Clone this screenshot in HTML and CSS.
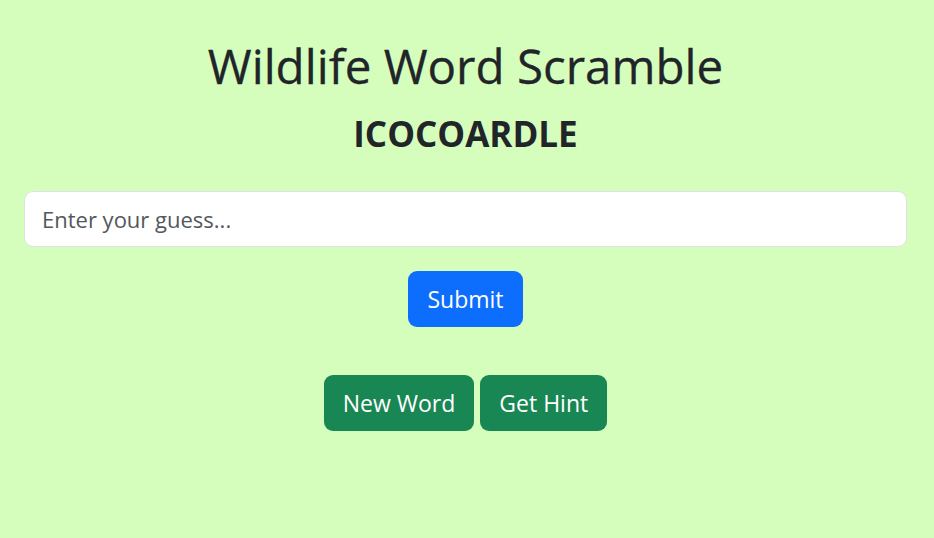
FILE: index.html
```html
<!DOCTYPE html>
<html lang="en">
<head>
<meta charset="utf-8">
<title>Wildlife Word Scramble</title>
<link rel="stylesheet" href="styles.css">
</head>
<body>
<main class="game">
  <h1 class="title">Wildlife Word Scramble</h1>
  <h2 class="scrambled">ICOCOARDLE</h2>
  <input class="guess" type="text" placeholder="Enter your guess...">
  <div class="row-submit">
    <button class="btn btn-primary">Submit</button>
  </div>
  <div class="row-actions">
    <button class="btn btn-success">New Word</button>
    <button class="btn btn-success">Get Hint</button>
  </div>
</main>
</body>
</html>
```
FILE: styles.css
```css
html, body {
  margin: 0;
  padding: 0;
  background: #d5fdbb;
  color: #212529;
  font-family: "Open Sans", "Noto Sans", sans-serif;
}
.game {
  display: flex;
  flex-direction: column;
  align-items: stretch;
  padding: 35px 27px 0 24px;
  text-align: center;
}
.title {
  margin: 0;
  font-size: 47.5px;
  font-weight: 400;
  line-height: 62px;
  -webkit-text-stroke: 0.3px #212529;
}
.scrambled {
  margin: 16px 0 0 0;
  font-size: 35px;
  font-weight: 700;
  line-height: 42px;
}
.guess {
  margin-top: 36px;
  box-sizing: border-box;
  height: 56px;
  width: 100%;
  padding: 0 17px;
  border: 1px solid #dee2e6;
  border-radius: 9px;
  background: #fff;
  font-family: inherit;
  font-size: 22px;
  color: #212529;
  outline: none;
}
.guess::placeholder {
  color: #54575b;
}
.row-submit {
  margin-top: 24px;
  display: flex;
  justify-content: center;
}
.row-actions {
  margin-top: 48px;
  display: flex;
  justify-content: center;
  gap: 6px;
}
.btn {
  box-sizing: border-box;
  height: 56px;
  padding: 0 19px;
  border: none;
  border-radius: 9px;
  font-family: inherit;
  font-size: 23px;
  color: #fff;
  cursor: pointer;
}
.btn-primary { background: #0d6efd; }
.btn-success { background: #198754; }
```
